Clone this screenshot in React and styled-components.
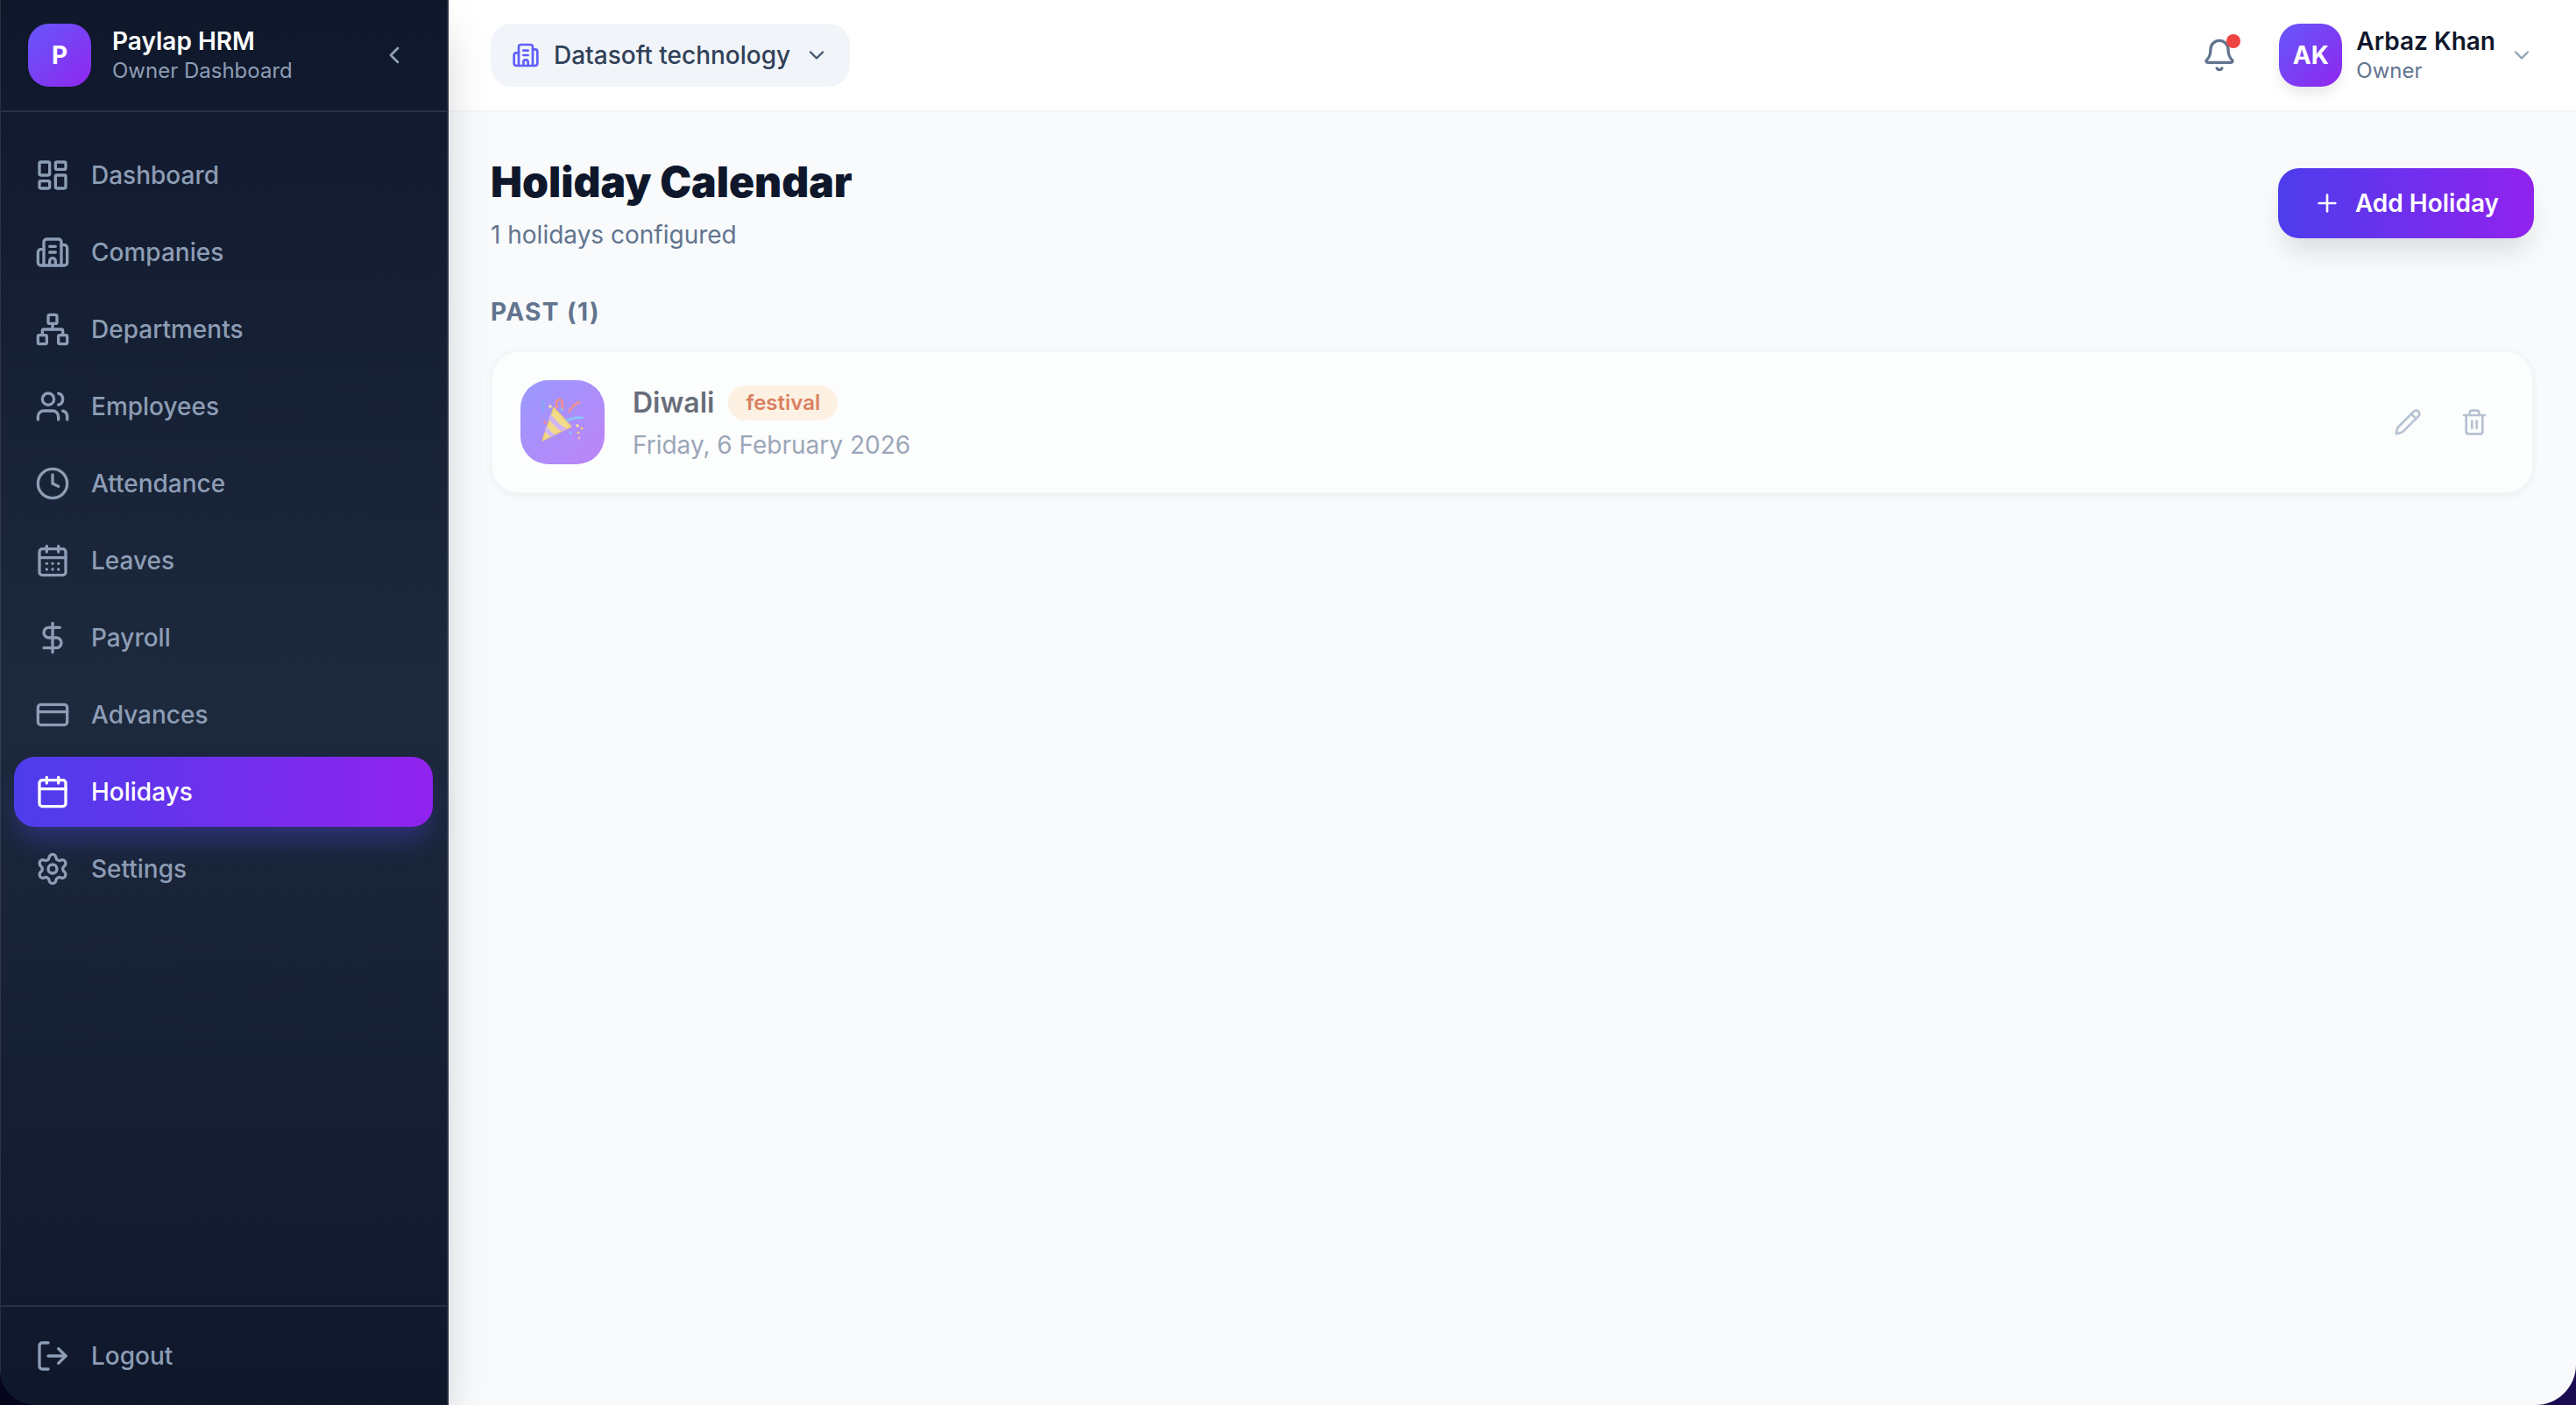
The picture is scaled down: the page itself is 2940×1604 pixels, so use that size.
import React from "react";
import styled, { createGlobalStyle } from "styled-components";
import {
  LayoutDashboard,
  Building2,
  Network,
  Users,
  Clock,
  CalendarDays,
  DollarSign,
  CreditCard,
  Calendar,
  Settings,
  LogOut,
  ChevronLeft,
  ChevronDown,
  Bell,
  Plus,
  Pencil,
  Trash2,
} from "lucide-react";

const GlobalStyle = createGlobalStyle`
  * { box-sizing: border-box; }
  html, body { margin: 0; height: 100%; background: linear-gradient(90deg, #05051c, #1a0b52); }
  body { font-family: Inter, "Noto Sans", sans-serif; }
  button { font-family: inherit; border: 0; background: none; padding: 0; cursor: pointer; }
`;

const navItems = [
  { label: "Dashboard", icon: LayoutDashboard },
  { label: "Companies", icon: Building2 },
  { label: "Departments", icon: Network },
  { label: "Employees", icon: Users },
  { label: "Attendance", icon: Clock },
  { label: "Leaves", icon: CalendarDays },
  { label: "Payroll", icon: DollarSign },
  { label: "Advances", icon: CreditCard },
  { label: "Holidays", icon: Calendar, active: true },
  { label: "Settings", icon: Settings },
];

const PartyPopper = () => (
  <svg width="60" height="60" viewBox="18 18 60 60" fill="none" strokeLinecap="round">
    <path d="M27 36c-5-2 3-5-1-8s2-4 1-6" stroke="#3f78ee" strokeWidth="2" />
    <path d="M42 31c-3-5 0-9 3-9s3 6 3 12" stroke="#ee4f4f" strokeWidth="2.6" />
    <path d="M56 36c-1-4 4-3 4-6s4-1 4-3s3-3 3-1" stroke="#ee4f4f" strokeWidth="2.2" />
    <path d="M38 31L58 53L25 69Z" fill="#f2c945" stroke="#dca72c" strokeWidth="1.5" strokeLinejoin="round" />
    <path d="M34.5 38.5C40 46 46 52 53 55.5L47 58.5C41 55 36 49 32 44Z" fill="#b98cf2" />
    <path d="M29.5 52C32 56.5 36 60.5 40 62L34.5 64.8C31.5 63 29 60 27.6 57Z" fill="#b98cf2" />
    <path d="M53 46c6-3 12-4 18-3" stroke="#45a9f7" strokeWidth="2.6" />
    <circle cx="34" cy="30" r="1.7" fill="#f8e052" />
    <circle cx="47" cy="34" r="1.7" fill="#3fa4f0" />
    <circle cx="62" cy="28" r="1.6" fill="#ee4f4f" />
    <circle cx="28" cy="48" r="1.7" fill="#ee4f4f" />
    <circle cx="65" cy="52" r="1.7" fill="#f8e052" />
    <circle cx="70" cy="55" r="1.6" fill="#f3a92f" />
    <circle cx="57" cy="60" r="1.7" fill="#3fa4f0" />
    <circle cx="66" cy="60" r="1.5" fill="#f3a92f" />
    <circle cx="67" cy="66" r="1.5" fill="#f28a8a" />
  </svg>
);

const App = () => (
  <>
    <GlobalStyle />
    <Shell>
      <Sidebar>
        <BrandBar>
          <BrandMark>P</BrandMark>
          <BrandText>
            <BrandName>Paylap HRM</BrandName>
            <BrandRole>Owner Dashboard</BrandRole>
          </BrandText>
          <CollapseButton aria-label="Collapse sidebar">
            <ChevronLeft size={32} />
          </CollapseButton>
        </BrandBar>
        <Nav>
          {navItems.map(({ label, icon: Icon, active }) => (
            <NavItem key={label} $active={active}>
              <Icon size={40} />
              {label}
            </NavItem>
          ))}
        </Nav>
        <SidebarFooter>
          <NavItem>
            <LogOut size={40} />
            Logout
          </NavItem>
        </SidebarFooter>
      </Sidebar>

      <Main>
        <TopBar>
          <CompanyPicker>
            <Building2 size={32} color="#615fff" />
            Datasoft technology
            <ChevronDown size={28} color="#45556c" />
          </CompanyPicker>
          <TopBarRight>
            <BellButton aria-label="Notifications">
              <Bell size={40} />
              <BellDot />
            </BellButton>
            <UserMenu>
              <Avatar>AK</Avatar>
              <UserText>
                <UserName>Arbaz Khan</UserName>
                <UserRole>Owner</UserRole>
              </UserText>
              <ChevronDown size={28} color="#90a1b9" />
            </UserMenu>
          </TopBarRight>
        </TopBar>

        <Content>
          <PageHead>
            <div>
              <PageTitle>Holiday Calendar</PageTitle>
              <PageSubtitle>1 holidays configured</PageSubtitle>
            </div>
            <AddButton>
              <Plus size={32} />
              Add Holiday
            </AddButton>
          </PageHead>

          <SectionTitle>PAST (1)</SectionTitle>
          <HolidayCard>
            <EmojiTile>
              <PartyPopper />
            </EmojiTile>
            <HolidayInfo>
              <HolidayNameRow>
                <HolidayName>Diwali</HolidayName>
                <TypeBadge>festival</TypeBadge>
              </HolidayNameRow>
              <HolidayDate>Friday, 6 February 2026</HolidayDate>
            </HolidayInfo>
            <CardActions>
              <ActionButton aria-label="Edit">
                <Pencil size={32} />
              </ActionButton>
              <ActionButton aria-label="Delete">
                <Trash2 size={32} />
              </ActionButton>
            </CardActions>
          </HolidayCard>
        </Content>
      </Main>
    </Shell>
  </>
);

const Shell = styled.div`
  display: flex;
  height: 100vh;
  overflow: hidden;
  border-radius: 0 0 46px 40px;
`;

const Sidebar = styled.aside`
  position: relative;
  z-index: 2;
  display: flex;
  flex-direction: column;
  flex: 0 0 512px;
  background: linear-gradient(180deg, #0f172b 0%, #1d293d 50%, #0f172b 100%);
  border-left: 1px solid rgba(255, 255, 255, 0.1);
  border-right: 2px solid rgba(255, 255, 255, 0.1);
  box-shadow: 0 25px 50px -12px rgba(0, 0, 0, 0.25);
`;

const BrandBar = styled.div`
  display: flex;
  align-items: center;
  gap: 24px;
  height: 128px;
  padding: 0 32px 0 31px;
  border-bottom: 2px solid rgba(255, 255, 255, 0.1);
`;

const BrandMark = styled.div`
  display: flex;
  align-items: center;
  justify-content: center;
  width: 72px;
  height: 72px;
  border-radius: 24px;
  background: linear-gradient(135deg, #6558fa, #9026ee);
  color: #fff;
  font-size: 28px;
  font-weight: 700;
`;

const BrandText = styled.div`
  flex: 1;
`;

const BrandName = styled.div`
  color: #fff;
  font-size: 28px;
  font-weight: 600;
  line-height: 36px;
`;

const BrandRole = styled.div`
  color: #8d9db5;
  font-size: 24px;
  line-height: 32px;
`;

const CollapseButton = styled.button`
  display: flex;
  padding: 12px;
  color: #90a1b9;
`;

const Nav = styled.nav`
  flex: 1;
  display: flex;
  flex-direction: column;
  gap: 8px;
  padding: 32px 16px 0 15px;
`;

const NavItem = styled.a`
  display: flex;
  align-items: center;
  gap: 24px;
  height: 80px;
  padding: 0 24px;
  border-radius: 24px;
  font-size: 28px;
  font-weight: 500;
  color: ${({ $active }) => ($active ? "#fff" : "#8d9db5")};
  background: ${({ $active }) =>
    $active ? "linear-gradient(90deg, #4d3dec, #9122ee)" : "transparent"};
  box-shadow: ${({ $active }) =>
    $active ? "0 20px 30px -6px rgba(79, 70, 229, 0.38)" : "none"};
`;

const SidebarFooter = styled.div`
  padding: 16px 16px 16px 15px;
  border-top: 2px solid rgba(255, 255, 255, 0.1);
`;

const Main = styled.main`
  flex: 1;
  display: flex;
  flex-direction: column;
  min-width: 0;
  background: #f8fafc;
`;

const TopBar = styled.header`
  display: flex;
  align-items: center;
  justify-content: space-between;
  height: 128px;
  padding: 0 48px;
  background: #fff;
  border-bottom: 2px solid #f1f5f9;
`;

const CompanyPicker = styled.button`
  display: flex;
  align-items: center;
  gap: 16px;
  height: 72px;
  padding: 0 24px;
  border-radius: 24px;
  background: #f1f5f9;
  color: #314158;
  font-size: 28px;
  font-weight: 500;
`;

const TopBarRight = styled.div`
  display: flex;
  align-items: center;
  gap: 32px;
`;

const BellButton = styled.button`
  position: relative;
  display: flex;
  padding: 16px;
  color: #62748e;
`;

const BellDot = styled.span`
  position: absolute;
  top: 12px;
  right: 12px;
  width: 16px;
  height: 16px;
  border-radius: 50%;
  background: #ef4444;
`;

const UserMenu = styled.div`
  display: flex;
  align-items: center;
  gap: 16px;
`;

const Avatar = styled.div`
  display: flex;
  align-items: center;
  justify-content: center;
  width: 72px;
  height: 72px;
  border-radius: 24px;
  background: linear-gradient(135deg, #6558fa, #9026ee);
  box-shadow: 0 10px 15px -3px rgba(0, 0, 0, 0.1);
  color: #fff;
  font-size: 28px;
  font-weight: 700;
`;

const UserText = styled.div``;

const UserName = styled.div`
  color: #0f172b;
  font-size: 28px;
  font-weight: 600;
  line-height: 36px;
`;

const UserRole = styled.div`
  color: #62748e;
  font-size: 24px;
  line-height: 32px;
`;

const Content = styled.div`
  flex: 1;
  padding: 48px;
`;

const PageHead = styled.div`
  display: flex;
  align-items: center;
  justify-content: space-between;
  margin-bottom: 48px;
`;

const PageTitle = styled.h1`
  margin: 0;
  color: #0f172b;
  font-size: 48px;
  font-weight: 900;
  line-height: 64px;
`;

const PageSubtitle = styled.p`
  margin: 8px 0 0;
  color: #62748e;
  font-size: 28px;
  line-height: 40px;
`;

const AddButton = styled.button`
  display: flex;
  align-items: center;
  gap: 16px;
  height: 80px;
  padding: 0 40px;
  border-radius: 24px;
  background: linear-gradient(90deg, #4d3dec, #9122ee);
  box-shadow: 0 20px 30px -6px rgba(0, 0, 0, 0.12);
  color: #fff;
  font-size: 28px;
  font-weight: 600;
`;

const SectionTitle = styled.h2`
  margin: 0 0 24px;
  color: #62748e;
  font-size: 28px;
  font-weight: 700;
  line-height: 40px;
  letter-spacing: 1.4px;
`;

const HolidayCard = styled.div`
  display: flex;
  align-items: center;
  gap: 32px;
  padding: 32px;
  border: 2px solid #f1f5f9;
  border-radius: 32px;
  background: #fff;
  box-shadow: 0 2px 6px rgba(0, 0, 0, 0.08);
  opacity: 0.62;
`;

const EmojiTile = styled.div`
  display: flex;
  align-items: center;
  justify-content: center;
  width: 96px;
  height: 96px;
  border-radius: 32px;
  background: linear-gradient(135deg, #615fff, #9a3cf5);
`;

const HolidayInfo = styled.div`
  flex: 1;
`;

const HolidayNameRow = styled.div`
  display: flex;
  align-items: center;
  gap: 16px;
`;

const HolidayName = styled.div`
  color: #0f172b;
  font-size: 32px;
  font-weight: 600;
  line-height: 48px;
`;

const TypeBadge = styled.span`
  padding: 4px 20px;
  border-radius: 999px;
  background: #ffedd4;
  color: #ca3500;
  font-size: 24px;
  font-weight: 600;
  line-height: 32px;
`;

const HolidayDate = styled.div`
  margin-top: 4px;
  color: #62748e;
  font-size: 28px;
  line-height: 40px;
`;

const CardActions = styled.div`
  display: flex;
  gap: 12px;
  margin-right: 2px;
`;

const ActionButton = styled.button`
  display: flex;
  padding: 16px;
  color: #90a1b9;
`;

export default App;
